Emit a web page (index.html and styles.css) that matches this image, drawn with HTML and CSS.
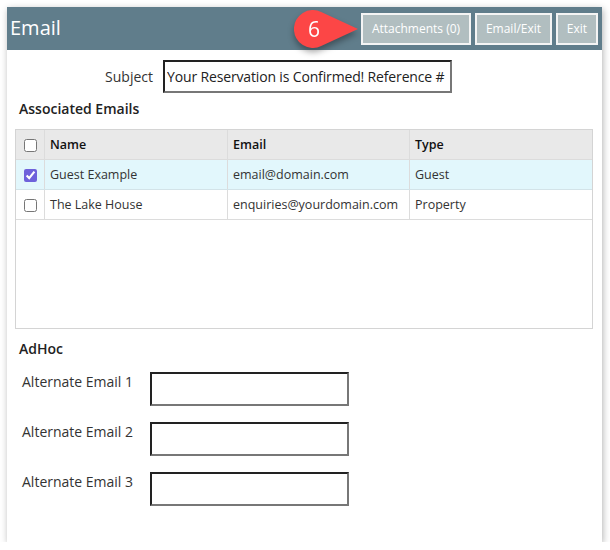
FILE: index.html
```html
<!DOCTYPE html>
<html lang="en">
<head>
    <meta charset="UTF-8">
    <meta name="viewport" content="width=device-width, initial-scale=1.0">
    <title>Email</title>
    <link rel="stylesheet" href="styles.css">
</head>
<body>
    <div class="email-panel">
        <div class="panel-header">
            <h1>Email</h1>
            <svg class="step-badge" width="66" height="46" viewBox="0 0 66 46">
                <path d="M64,19 L27.2,1.9 A19,19 0 1 0 27.2,36.1 Z" fill="#fc4646"/>
                <text x="20" y="26.5" text-anchor="middle" class="step-num">6</text>
            </svg>
            <div class="header-buttons">
                <button class="head-button btn-attach">Attachments (0)</button>
                <button class="head-button btn-send">Email/Exit</button>
                <button class="head-button btn-exit">Exit</button>
            </div>
        </div>

        <div class="subject-row">
            <label class="subject-label">Subject</label>
            <input type="text" class="subject-input" value="Your Reservation is Confirmed! Reference #">
        </div>

        <h2 class="section-title">Associated Emails</h2>
        <div class="table-wrap">
            <table class="email-table">
                <thead>
                    <tr>
                        <th class="col-check"><input type="checkbox"></th>
                        <th class="col-name">Name</th>
                        <th class="col-email">Email</th>
                        <th>Type</th>
                    </tr>
                </thead>
                <tbody>
                    <tr class="selected">
                        <td class="col-check"><input type="checkbox" checked></td>
                        <td>Guest Example</td>
                        <td>email@domain.com</td>
                        <td>Guest</td>
                    </tr>
                    <tr>
                        <td class="col-check"><input type="checkbox"></td>
                        <td>The Lake House</td>
                        <td>enquiries@yourdomain.com</td>
                        <td>Property</td>
                    </tr>
                </tbody>
            </table>
        </div>

        <h2 class="section-title adhoc-title">AdHoc</h2>
        <div class="adhoc-list">
            <div class="adhoc-row">
                <label class="adhoc-label">Alternate Email 1</label>
                <input type="text" class="adhoc-input">
            </div>
            <div class="adhoc-row">
                <label class="adhoc-label">Alternate Email 2</label>
                <input type="text" class="adhoc-input">
            </div>
            <div class="adhoc-row">
                <label class="adhoc-label">Alternate Email 3</label>
                <input type="text" class="adhoc-input">
            </div>
        </div>
    </div>
</body>
</html>
```

FILE: styles.css
```css
body {
    margin: 0;
    font-family: "Open Sans", "Liberation Sans", sans-serif;
    background-color: #fff;
    color: #333;
}

.email-panel {
    margin: 7px 0 0 7px;
    width: 595px;
    height: 535px;
    background: #fff;
    box-shadow: 1px 2px 7px rgba(0, 0, 0, 0.3);
}

.panel-header {
    position: relative;
    display: flex;
    align-items: center;
    height: 43px;
    padding: 0 4px 0 3px;
    background: #607d8b;
}

.panel-header h1 {
    flex: 1;
    margin: 0 0 3px;
    font-size: 20px;
    font-weight: normal;
    color: #fff;
}

.step-badge {
    position: absolute;
    left: 287px;
    top: 3px;
    filter: drop-shadow(0 4px 3px rgba(0, 0, 0, 0.35));
}

.step-num {
    font-family: "Open Sans", sans-serif;
    font-size: 21px;
    fill: #fff;
}

.header-buttons {
    display: flex;
    gap: 4px;
}

.head-button {
    height: 32px;
    padding: 0;
    background: #b1bec0;
    color: #fff;
    border: 2px solid #f4f4f4;
    font-family: "Open Sans", sans-serif;
    font-size: 12px;
}

.btn-attach { width: 110px; }
.btn-send { width: 77px; }
.btn-exit { width: 42px; }

.subject-row {
    display: flex;
    align-items: center;
    margin-top: 10px;
}

.subject-label {
    width: 146px;
    margin-right: 10px;
    text-align: right;
    font-size: 14px;
}

.subject-input,
.adhoc-input {
    box-sizing: border-box;
    border: 2px solid;
    border-color: #222 #777 #777 #222;
    padding: 0 2px;
    font-family: "Open Sans", sans-serif;
    color: #222;
    outline: none;
}

.subject-input {
    width: 289px;
    height: 33px;
    font-size: 14px;
    letter-spacing: -0.15px;
}

.section-title {
    margin: 6px 0 0 12px;
    font-size: 14px;
    font-weight: 600;
    line-height: 20px;
    color: #222;
}

.table-wrap {
    box-sizing: border-box;
    width: 578px;
    height: 200px;
    margin: 10px 0 0 8px;
    border: 1px solid #d4d4d4;
}

.email-table {
    width: 100%;
    border-collapse: collapse;
    font-size: 12.5px;
}

.email-table th,
.email-table td {
    height: 29px;
    padding: 0 5px;
    text-align: left;
    border-right: 1px solid #dcdcdc;
    border-bottom: 1px solid #dcdcdc;
}

.email-table th:last-child,
.email-table td:last-child {
    border-right: none;
}

.email-table th {
    background: #e9e9e9;
    font-weight: 600;
    color: #111;
}

.email-table td {
    color: #333;
}

.email-table .col-check {
    width: 18px;
    text-align: center;
}

.col-check input {
    margin: 0;
    width: 13px;
    height: 13px;
    vertical-align: middle;
    accent-color: #6e62db;
}

.col-name { width: 172px; }
.col-email { width: 171px; }

.email-table tr.selected td {
    background: #e2f7fc;
    border-bottom-color: #d3e3e8;
}

.adhoc-title {
    margin-top: 10px;
}

.adhoc-list {
    display: flex;
    flex-direction: column;
    gap: 16px;
    margin-top: 13px;
    padding-left: 15px;
}

.adhoc-row {
    display: flex;
    align-items: flex-start;
}

.adhoc-label {
    width: 128px;
    font-size: 14px;
    line-height: 20px;
}

.adhoc-input {
    width: 199px;
    height: 34px;
    font-size: 14px;
}
```
